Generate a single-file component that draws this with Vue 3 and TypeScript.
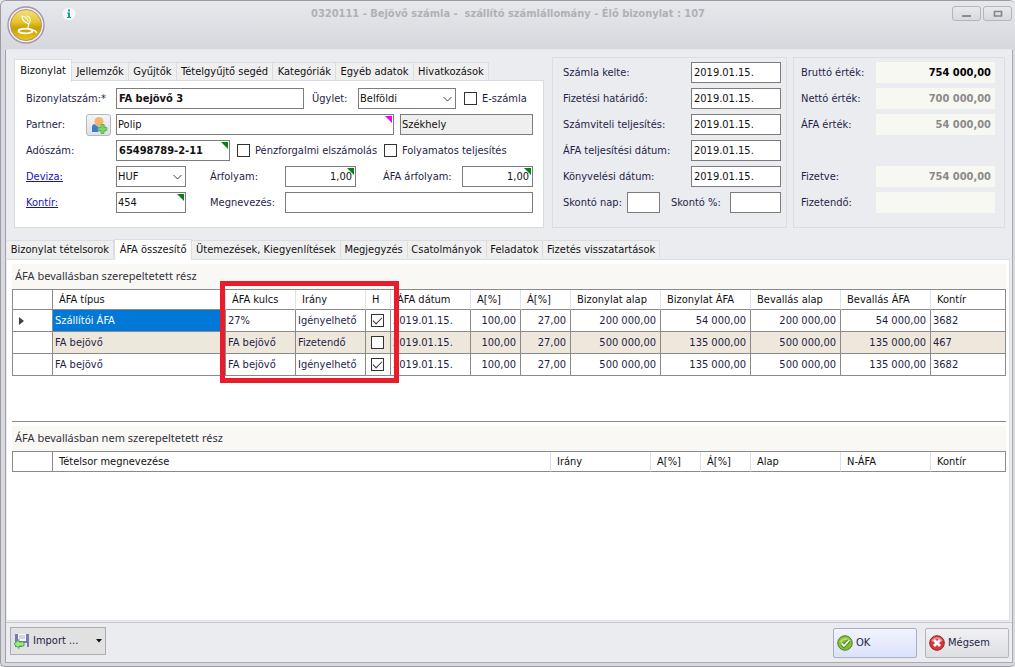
<script setup lang="ts">
import { ref } from 'vue'

interface VatRow {
  type: string
  rate: string
  direction: string
  h: boolean
  date: string
  a: string
  b: string
  docBase: string
  docVat: string
  declBase: string
  declVat: string
  account: string
}

const formTabs = ['Bizonylat', 'Jellemzők', 'Gyűjtők', 'Tételgyűjtő segéd', 'Kategóriák', 'Egyéb adatok', 'Hivatkozások']
const detailTabs = ['Bizonylat tételsorok', 'ÁFA összesítő', 'Ütemezések, Kiegyenlítések', 'Megjegyzés', 'Csatolmányok', 'Feladatok', 'Fizetés visszatartások']
const formTab = ref(0)
const detailTab = ref(1)

const dates = ref([
  { id: 'd1', label: 'Számla kelte:', value: '2019.01.15.' },
  { id: 'd2', label: 'Fizetési határidő:', value: '2019.01.15.' },
  { id: 'd3', label: 'Számviteli teljesítés:', value: '2019.01.15.' },
  { id: 'd4', label: 'ÁFA teljesítési dátum:', value: '2019.01.15.' },
  { id: 'd5', label: 'Könyvelési dátum:', value: '2019.01.15.' },
])

const totals = [
  { id: 't1', label: 'Bruttó érték:', value: '754 000,00', cls: 'strong' },
  { id: 't2', label: 'Nettó érték:', value: '700 000,00', cls: '' },
  { id: 't3', label: 'ÁFA érték:', value: '54 000,00', cls: '' },
  { id: 't4', label: 'Fizetve:', value: '754 000,00', cls: 'apart' },
  { id: 't5', label: 'Fizetendő:', value: '', cls: '' },
]

const rows = ref<VatRow[]>([
  { type: 'Szállítói ÁFA', rate: '27%', direction: 'Igényelhető', h: true, date: '2019.01.15.', a: '100,00', b: '27,00', docBase: '200 000,00', docVat: '54 000,00', declBase: '200 000,00', declVat: '54 000,00', account: '3682' },
  { type: 'FA bejövő', rate: 'FA bejövő', direction: 'Fizetendő', h: false, date: '2019.01.15.', a: '100,00', b: '27,00', docBase: '500 000,00', docVat: '135 000,00', declBase: '500 000,00', declVat: '135 000,00', account: '467' },
  { type: 'FA bejövő', rate: 'FA bejövő', direction: 'Igényelhető', h: true, date: '2019.01.15.', a: '100,00', b: '27,00', docBase: '500 000,00', docVat: '135 000,00', declBase: '500 000,00', declVat: '135 000,00', account: '3682' },
])
const headers = ['ÁFA típus', 'ÁFA kulcs', 'Irány', 'H', 'ÁFA dátum', 'A[%]', 'Á[%]', 'Bizonylat alap', 'Bizonylat ÁFA', 'Bevallás alap', 'Bevallás ÁFA', 'Kontír']
const restHeaders = ['Tételsor megnevezése', 'Irány', 'A[%]', 'Á[%]', 'Alap', 'N-ÁFA', 'Kontír']
</script>

<template>
  <div class="window">
    <header class="titlebar">
      <svg class="logo" viewBox="0 0 38 38" aria-hidden="true">
        <defs>
          <linearGradient id="gold" x1="0" y1="0" x2="0" y2="1">
            <stop offset="0" stop-color="#f3df86" />
            <stop offset="0.4" stop-color="#e8c52c" />
            <stop offset="0.6" stop-color="#c99d08" />
            <stop offset="1" stop-color="#ecc91c" />
          </linearGradient>
        </defs>
        <circle cx="19" cy="19" r="18" fill="#f1eef5" stroke="#a296b4" stroke-width="1.4" />
        <circle cx="19" cy="19" r="15.5" fill="url(#gold)" stroke="#b39a58" />
        <path d="M15 10c0 4 2 6 6 7.500M15 10c3 .5 5 2 6 5M20 10c4 1 4 5 2 7.500-1 1.500-1 3-1 5" fill="none" stroke="#fff" stroke-width="1.200" stroke-linecap="round" />
        <ellipse cx="18.500" cy="25" rx="7" ry="2.300" fill="none" stroke="#fff" stroke-width="1.700" />
        <path d="M25 24.500c2-.5 3.500 0 4.500 2" fill="none" stroke="#fff" stroke-width="1.500" stroke-linecap="round" />
      </svg>
      <svg class="info" viewBox="0 0 14 14" aria-hidden="true">
        <circle cx="7" cy="7" r="6.5" fill="#f4f8f8" />
        <path d="M6 2.500h2v2h-2zM5 5.500h3v4.500h1v1h-4v-1h1v-3.500h-1z" fill="#1d9c9c" />
      </svg>
      <h1 class="title">0320111 - Bejövő számla -&nbsp; szállító számlállomány - Élő bizonylat : 107</h1>
      <div class="winbtns">
        <button type="button" aria-label="Kis méret"><svg viewBox="0 0 10 8"><path d="M0 5h9v2h-9z" fill="#8b8d93" /></svg></button>
        <button type="button" aria-label="Teljes méret"><svg viewBox="0 0 10 8"><path d="M1.500 1.500h7v4.500h-7z" fill="none" stroke="#85878d" stroke-width="1.700" /></svg></button>
      </div>
    </header>

    <main class="body">
      <section class="top">
        <div class="form">
          <div class="tabs form-tabs" role="tablist">
            <button v-for="(t, i) in formTabs" :key="t" type="button" role="tab" :aria-selected="i === formTab" :class="['tab', { on: i === formTab }]" @click="formTab = i">{{ t }}</button>
          </div>
          <div class="form-panel">
            <div class="row">
              <label class="l1" for="docno">Bizonylatszám:*</label>
              <input id="docno" class="field w188 bold" value="FA bejövő 3" />
              <label class="deal" for="deal">Ügylet:</label>
              <span class="box w98">
                <select id="deal" class="field"><option>Belföldi</option></select>
                <svg class="chev" viewBox="0 0 9 6"><path d="M.5 1l4 4 4-4" fill="none" stroke="#444" /></svg>
              </span>
              <label class="check einv"><input type="checkbox" />E-számla</label>
            </div>
            <div class="row">
              <label class="l2" for="partner">Partner:</label>
              <button type="button" class="addbtn" aria-label="Partner hozzáadása">
                <svg viewBox="0 0 18 18">
                  <path d="M2 16v-5q0-3 4-3h6q4 0 4 3v5z" fill="#a9c6e6" />
                  <path d="M2 16v-5q0-2 2-3l4 3v5z" fill="#3f7cc4" />
                  <circle cx="9" cy="5.500" r="4.500" fill="#f5b56a" />
                  <path d="M11 8.500h3v3h3v3h-3v3h-3v-3h-3v-3h3z" fill="#78d85c" stroke="#4fae3e" stroke-width="0.700" />
                </svg>
              </button>
              <span class="box grow"><input id="partner" class="field" value="Polip" /><i class="mark pink"></i></span>
              <input class="field w133 site" value="Székhely" aria-label="Telephely" readonly />
            </div>
            <div class="row">
              <label class="l1" for="tax">Adószám:</label>
              <span class="box w114"><input id="tax" class="field bold" value="65498789-2-11" /><i class="mark"></i></span>
              <label class="check cash"><input type="checkbox" />Pénzforgalmi elszámolás</label>
              <label class="check"><input type="checkbox" />Folyamatos teljesítés</label>
            </div>
            <div class="row">
              <a class="l1" href="#deviza">Deviza:</a>
              <span class="box w70">
                <select class="field" aria-label="Deviza"><option>HUF</option></select>
                <svg class="chev" viewBox="0 0 9 6"><path d="M.5 1l4 4 4-4" fill="none" stroke="#444" /></svg>
              </span>
              <label class="mid" for="rate">Árfolyam:</label>
              <span class="box w71"><input id="rate" class="field num" value="1,00" /><i class="mark"></i></span>
              <label class="vatrate" for="vatrate">ÁFA árfolyam:</label>
              <span class="box w71"><input id="vatrate" class="field num" value="1,00" /><i class="mark"></i></span>
            </div>
            <div class="row">
              <a class="l1" href="#kontir">Kontír:</a>
              <span class="box w70"><input class="field" value="454" aria-label="Kontír" /><i class="mark"></i></span>
              <label class="mid" for="name">Megnevezés:</label>
              <input id="name" class="field grow" />
            </div>
          </div>
        </div>

        <div class="group dates">
          <div v-for="d in dates" :key="d.id" class="row">
            <label class="grow" :for="d.id">{{ d.label }}</label>
            <input :id="d.id" v-model="d.value" class="field w90" />
          </div>
          <div class="row">
            <label class="disc" for="disc-day">Skontó nap:</label>
            <input id="disc-day" class="field w33" />
            <label class="disc-pct" for="disc-pct">Skontó %:</label>
            <input id="disc-pct" class="field grow" />
          </div>
        </div>

        <div class="group totals">
          <div v-for="t in totals" :key="t.id" :class="['row', t.cls]">
            <label :for="t.id">{{ t.label }}</label>
            <input :id="t.id" class="total" :value="t.value" readonly />
          </div>
        </div>
      </section>

      <div class="tabs detail-tabs" role="tablist">
        <button v-for="(t, i) in detailTabs" :key="t" type="button" role="tab" :aria-selected="i === detailTab" :class="['tab', { on: i === detailTab }]" @click="detailTab = i">{{ t }}</button>
      </div>

      <section class="detail">
        <div class="upper">
          <h2 class="strip">ÁFA bevallásban szerepeltetett rész</h2>
          <div class="table-wrap">
            <table>
              <colgroup>
                <col class="c40" /><col class="c173" /><col class="c70" /><col class="c70" /><col class="c25" /><col class="c80" />
                <col class="c50" /><col class="c50" /><col class="c90" /><col class="c90" /><col class="c90" /><col class="c90" /><col />
              </colgroup>
              <thead>
                <tr><th></th><th v-for="h in headers" :key="h">{{ h }}</th></tr>
              </thead>
              <tbody>
                <tr v-for="(r, i) in rows" :key="i">
                  <td class="ptr"><svg v-if="i === 0" viewBox="0 0 5 8"><path d="M0 0l5 4-5 4z" fill="#444" /></svg></td>
                  <td :class="{ sel: i === 0 }">{{ r.type }}</td>
                  <td>{{ r.rate }}</td>
                  <td>{{ r.direction }}</td>
                  <td class="chk"><input v-model="r.h" type="checkbox" aria-label="H" /></td>
                  <td>{{ r.date }}</td>
                  <td class="r">{{ r.a }}</td>
                  <td class="r">{{ r.b }}</td>
                  <td class="r">{{ r.docBase }}</td>
                  <td class="r">{{ r.docVat }}</td>
                  <td class="r">{{ r.declBase }}</td>
                  <td class="r">{{ r.declVat }}</td>
                  <td>{{ r.account }}</td>
                </tr>
              </tbody>
            </table>
            <div class="highlight"></div>
          </div>
        </div>
        <div class="lower">
          <h2 class="strip">ÁFA bevallásban nem szerepeltetett rész</h2>
          <table>
            <colgroup>
              <col class="c40" /><col /><col class="c100" /><col class="c50" /><col class="c50" /><col class="c90" /><col class="c90" /><col class="c75" />
            </colgroup>
            <thead>
              <tr><th></th><th v-for="h in restHeaders" :key="h">{{ h }}</th></tr>
            </thead>
          </table>
        </div>
      </section>

      <footer class="footer">
        <button type="button" class="import">
          <svg class="ico" viewBox="0 0 16 16">
            <path d="M1 1h14v13h-14z" fill="#7d77b4" />
            <path d="M4 1h8v7h-8z" fill="#f4f5fb" />
            <path d="M5 3h6M5 5h6" stroke="#a9b2cc" />
            <path d="M8 10h5v4h-5z" fill="#dfe2ee" />
            <path d="M0 11l5-4.500v2.500h5v4h-5v2.500z" fill="#9bea7c" stroke="#3f9f35" stroke-width="0.800" />
          </svg>
          <span>Import ...</span>
          <svg class="drop" viewBox="0 0 6 4"><path d="M0 0h6l-3 3.500z" fill="#111" /></svg>
        </button>
        <button type="button" class="act ok">
          <svg class="ico" viewBox="0 0 16 16">
            <circle cx="8" cy="8" r="7.300" fill="#86bd35" stroke="#4f8a1c" />
            <path d="M3 7.500q5-7 10-1" fill="none" stroke="#b9dc79" stroke-width="2" />
            <path d="M4.500 8.500l2.500 2.500 5-5.500" fill="none" stroke="#487c1c" stroke-width="3.400" />
            <path d="M4.500 8.500l2.500 2.500 5-5.500" fill="none" stroke="#fff" stroke-width="1.800" />
          </svg>
          <span>OK</span>
        </button>
        <button type="button" class="act">
          <svg class="ico" viewBox="0 0 16 16">
            <circle cx="8" cy="8" r="7.300" fill="#d8373a" stroke="#9c1e22" />
            <path d="M3 6q5-6 10 0" fill="none" stroke="#ee8a8a" stroke-width="2" />
            <path d="M5 5l6 6M11 5l-6 6" fill="none" stroke="#fff" stroke-width="2.800" />
          </svg>
          <span>Mégsem</span>
        </button>
      </footer>
    </main>
  </div>
</template>

<style>
body {
  background: #e8e8ec;
}
</style>

<style scoped>
* {
  box-sizing: border-box;
}
.window {
  display: flex;
  flex-direction: column;
  min-height: 100vh;
  padding: 0 2px 3px 4px;
  border: 1px solid #9a9ba3;
  border-right: 0;
  border-radius: 6px 6px 5px 5px;
  background: #d9dae0;
  color: #1e1e46;
  font: 11px/14px "DejaVu Sans Condensed", "Open Sans", sans-serif;
}
button, input, select {
  margin: 0;
  font: inherit;
  color: inherit;
}
.titlebar {
  position: relative;
  display: flex;
  align-items: flex-start;
  justify-content: center;
  height: 48px;
  margin: 0 -2px 0 -4px;
  border-radius: 5px 5px 0 0;
  background: linear-gradient(#e7e8eb, #d7d8de);
}
.logo {
  position: absolute;
  left: 6px;
  top: 5px;
  width: 38px;
  height: 38px;
}
.info {
  position: absolute;
  left: 61px;
  top: 6px;
  width: 14px;
  height: 14px;
}
.title {
  margin: 6px 0 0;
  font-size: 11px;
  font-weight: bold;
  color: #b0b1b6;
}
.winbtns {
  position: absolute;
  right: 3px;
  top: 5px;
  display: flex;
  gap: 2px;
}
.winbtns button {
  display: grid;
  place-items: center;
  width: 29px;
  height: 15px;
  padding: 0;
  border: 1px solid #b3b5bb;
  border-radius: 3px;
  background: linear-gradient(#e8e9ec, #d8d9de);
}
.winbtns svg {
  width: 10px;
  height: 8px;
}
.body {
  flex: 1;
  display: flex;
  flex-direction: column;
  border: 1px solid #a9aab2;
  border-top-color: #e4e5e9;
  border-left-color: #9fa0aa;
  background: #ebecf0;
}
.top {
  display: flex;
  padding: 7px 7px 0 8px;
}
.form {
  flex: 1;
  margin-right: 8px;
}
.tabs {
  display: flex;
  align-items: flex-end;
}
.form-tabs {
  width: 475px;
  height: 23px;
  margin-top: 1px;
}
.tab {
  flex: 1 0 auto;
  height: 18px;
  margin-bottom: 1px;
  padding: 0;
  border: 1px solid #dcdde1;
  border-left-width: 0;
  border-bottom: 0;
  background: #efeff0;
  color: #111;
  line-height: 18px;
  text-align: center;
}
.tab.on {
  height: 23px;
  margin-bottom: -1px;
  background: #fff;
  position: relative;
  padding: 0 1px;
  border-left-width: 1px;
}
.form-panel {
  display: flex;
  flex-direction: column;
  gap: 5px;
  margin-top: -1px;
  padding: 7px 10px 14px 11px;
  border: 1px solid #d7dae0;
  background: #fff;
}
.row {
  display: flex;
  align-items: center;
  height: 21px;
  white-space: nowrap;
}
.field {
  width: 100%;
  height: 21px;
  min-width: 0;
  padding: 0 1px;
  border: 1px solid #7c7c7c;
  border-radius: 0;
  background: #fff;
  color: #111;
  appearance: none;
  outline: 0;
}
.row > .field {
  flex: none;
}
.row > .grow {
  flex: 1;
  width: auto;
}
.field.bold {
  padding-left: 2px;
  font-weight: bold;
}
.field.num {
  padding-right: 3px;
  text-align: right;
}
.box {
  position: relative;
  display: flex;
  flex: none;
}
.chev {
  position: absolute;
  right: 4px;
  top: 8px;
  width: 9px;
  height: 6px;
  pointer-events: none;
}
.mark {
  position: absolute;
  right: 2px;
  top: 2px;
  border-top: 7px solid #0a7d14;
  border-left: 7px solid transparent;
}
.pink {
  border-top-color: #f000f0;
}
.l1 {
  width: 90px;
}
.l2 {
  width: 60px;
}
a {
  color: #1414b8;
  text-decoration: underline;
}
.deal {
  width: 54px;
  padding-left: 8px;
}
.mid {
  width: 99px;
  padding-left: 24px;
}
.vatrate {
  width: 106px;
  padding-left: 27px;
}
.site {
  margin-left: 6px;
  background: #efefef;
}
.w188.field { width: 188px; }
.w133.field { width: 133px; }
.w90.field { width: 90px; }
.w33.field { width: 33px; }
.w98 { width: 98px; }
.w114 { width: 114px; }
.w70 { width: 70px; }
.w71 { width: 71px; }
.check {
  display: flex;
  align-items: center;
  gap: 5px;
}
.einv {
  margin-left: 8px;
}
.cash {
  width: 147px;
  margin-left: 7px;
}
input[type="checkbox"] {
  display: grid;
  place-items: center;
  flex: none;
  width: 13px;
  height: 13px;
  border: 1px solid #333;
  background: #fff;
  appearance: none;
}
input[type="checkbox"]:checked::after {
  content: "";
  width: 8px;
  height: 4px;
  margin-top: -2px;
  border: solid #333;
  border-width: 0 0 1px 1px;
  transform: rotate(-45deg);
}
.addbtn {
  display: grid;
  place-items: center;
  width: 25px;
  height: 22px;
  margin-right: 5px;
  padding: 0;
  border: 1px solid #b5b7bf;
  border-radius: 3px;
  background: linear-gradient(#f5f5f7, #dfe0e5);
}
.addbtn svg {
  width: 18px;
  height: 18px;
}
.group {
  display: flex;
  flex-direction: column;
  gap: 5px;
  border: 1px solid #dcdde1;
}
.dates {
  width: 235px;
  margin-right: 6px;
  padding: 4px 5px 13px 10px;
}
.dates .field {
  padding-left: 2px;
}
.disc {
  width: 64px;
}
.disc-pct {
  width: 70px;
  padding-left: 11px;
}
.totals {
  width: 212px;
  padding: 4px 9px 13px 7px;
}
.totals label {
  width: 75px;
}
.total {
  flex: 1;
  min-width: 0;
  height: 21px;
  padding: 0 4px;
  border: 0;
  background: #f8f8f3;
  color: #8a8a8a;
  font-weight: bold;
  text-align: right;
  outline: 0;
}
.strong .total {
  color: #000;
}
.apart {
  margin-top: 26px;
}
.detail-tabs {
  width: 653px;
  height: 20px;
  margin: 11px 0 0 1px;
}
.detail-tabs .on {
  margin-bottom: -1px;
  height: 21px;
}
.detail {
  flex: 1;
  display: flex;
  flex-direction: column;
  margin: 0 2px 0 1px;
  padding: 4px 3px 0 5px;
  border: 1px solid #dcdfe4;
  border-width: 1px 1px 1px 0;
  background: #fff;
}
.upper {
  height: 158px;
  border-bottom: 1px solid #8a8a8a;
}
.lower {
  padding-top: 4px;
}
.strip {
  height: 25px;
  margin: 0;
  padding-left: 3px;
  background: #f9f8f4;
  font: 11px/24px "Noto Sans", sans-serif;
  color: #33333f;
}
.table-wrap {
  position: relative;
}
table {
  width: 100%;
  table-layout: fixed;
  border-collapse: separate;
  border-spacing: 0;
  border: solid #8a8a8a;
  border-width: 1px 0 0 1px;
}
th, td {
  overflow: hidden;
  padding: 0 4px 0 2px;
  border: solid #8a8a8a;
  border-width: 0 1px 1px 0;
  text-align: left;
  white-space: nowrap;
}
th {
  height: 20px;
  padding: 0 0 0 6px;
  border-right-color: #dde1ea;
  color: #111;
  font-weight: normal;
}
th:first-child, th:last-child {
  border-right-color: #8a8a8a;
}
td {
  height: 22px;
}
tbody tr:nth-child(2) td:not(:first-child) {
  background: #eee8dc;
}
td.sel {
  background: #0078d7;
  color: #fff;
}
td.r {
  text-align: right;
}
.ptr {
  padding-left: 6px;
}
.ptr svg {
  display: block;
  width: 5px;
  height: 8px;
}
.chk {
  padding: 0 0 0 5px;
}
.c25 { width: 25px; }
.c40 { width: 40px; }
.c50 { width: 50px; }
.c70 { width: 70px; }
.c75 { width: 75px; }
.c80 { width: 80px; }
.c90 { width: 90px; }
.c100 { width: 100px; }
.c173 { width: 173px; }
.highlight {
  position: absolute;
  left: 208px;
  top: -8px;
  width: 179px;
  height: 102px;
  border: 5px solid #ea1c2c;
  pointer-events: none;
}
.footer {
  display: flex;
  gap: 8px;
  height: 40px;
  margin-top: 1px;
  padding: 4px 3px 0 4px;
  border-top: 1px solid #c6c7cc;
}
.footer button {
  display: flex;
  align-items: center;
  gap: 3px;
  padding: 0 3px;
}
.ico {
  width: 16px;
  height: 16px;
}
.import {
  width: 96px;
  height: 28px;
  margin-right: auto;
  border: 1px solid #adadb0;
  background: #e1e1e2;
}
.drop {
  width: 6px;
  height: 4px;
  margin-left: auto;
}
.act {
  width: 84px;
  height: 30px;
  margin-top: 1px;
  border: 1px solid #b3b5bd;
  border-radius: 2px;
  background: linear-gradient(#f1f1f4, #dedfe4);
}
.ok {
  border-color: #a9afc8;
  background: linear-gradient(#f2f4fd, #dbe2fb);
}
</style>
